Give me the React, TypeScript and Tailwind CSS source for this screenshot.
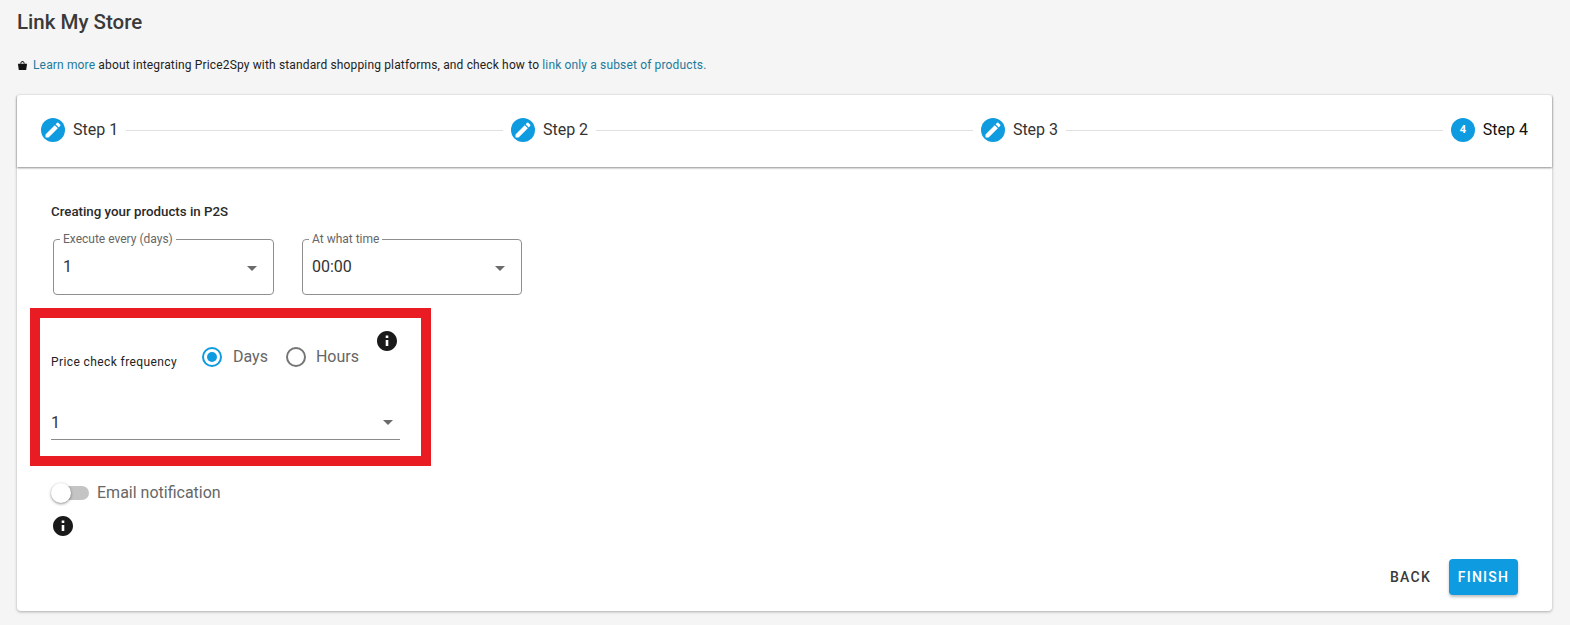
import React from "react";

const font = "font-['Roboto',sans-serif]";

const EditIcon = () => (
  <span className="w-6 h-6 rounded-full bg-[#0f9be0] flex items-center justify-center shrink-0">
    <svg viewBox="0 0 24 24" className="w-[20px] h-[20px]" fill="#fff">
      <path d="M3 17.25V21h3.75L17.81 9.94l-3.75-3.75L3 17.25zM20.71 7.04c.39-.39.39-1.02 0-1.41l-2.34-2.34a.9959.9959 0 0 0-1.41 0l-1.83 1.83 3.75 3.75 1.83-1.83z" />
    </svg>
  </span>
);

const InfoIcon = ({ className = "" }: { className?: string }) => (
  <svg viewBox="2 2 20 20" className={"w-5 h-5 block " + className} fill="#1a1a1a">
    <path d="M12 2C6.48 2 2 6.48 2 12s4.48 10 10 10 10-4.48 10-10S17.52 2 12 2zm1.3 15h-2.6v-6h2.6v6zm0-8h-2.6V6.6h2.6V9z" />
  </svg>
);

const Caret = ({ className = "" }: { className?: string }) => (
  <span className={"w-0 h-0 border-x-[5px] border-x-transparent border-t-[5px] border-t-[#6b6b6b] " + className} />
);

const Step = ({ n, active }: { n: number; active?: boolean }) => (
  <div className="flex items-center gap-2 shrink-0">
    {active ? (
      <span className="w-6 h-6 rounded-full bg-[#0f9be0] flex items-center justify-center text-white text-[11px] font-bold">
        {n}
      </span>
    ) : (
      <EditIcon />
    )}
    <span className={"text-[16px] leading-6 " + (active ? "text-[#111] font-normal" : "text-[#333]")}>Step {n}</span>
  </div>
);

const OutlinedSelect = ({ label, value, width }: { label: string; value: string; width: string }) => (
  <fieldset className={"relative h-[62px] border border-[#8f8f8f] rounded-[4px] px-[6px] " + width}>
    <legend className="text-[12px] leading-[12px] text-[#666] px-[3px] ml-0">{label}</legend>
    <div className="flex items-center justify-between pl-[3px] pr-[10px] mt-[10px]">
      <span className="text-[16px] leading-6 text-[#333]">{value}</span>
      <Caret className="mt-[3px]" />
    </div>
  </fieldset>
);

export default function App() {
  return (
    <div className={font + " w-[1570px] h-[625px] bg-[#f5f5f5] px-[17px] pt-[10px] overflow-hidden"}>
      <h1 className="text-[20.5px] leading-6 font-medium text-[#3a3a3a]">Link My Store</h1>

      <p className="mt-[23px] text-[12px] leading-[16px] tracking-[0.15px] text-[#222] flex items-center">
        <svg viewBox="0 0 12 12" className="w-[11px] h-[11px] mr-[5px]" fill="#111">
          <path d="M1 4.2h10L10 11H2z" />
          <path d="M3.6 4.2C3.6 2 5 1 6 1s2.4 1 2.4 3.2H7.4C7.4 3 6.7 2.2 6 2.2S4.6 3 4.6 4.2z" />
        </svg>
        <span>
          <span className="text-[#1b7a9c]">Learn more</span> about integrating Price2Spy with standard shopping
          platforms, and check how to <span className="text-[#1b7a9c]">link only a subset of products.</span>
        </span>
      </p>

      <div className="mt-[22px] w-[1535px] h-[516px] bg-white rounded-[4px] shadow-[0_1px_3px_rgba(0,0,0,0.3)] flex flex-col">
        <div className="h-[72px] px-[24px] pb-[2px] flex items-center shadow-[0_1px_2px_rgba(0,0,0,0.45)]">
          <Step n={1} />
          <div className="flex-1 h-px bg-[#e0e0e0] mx-2" />
          <Step n={2} />
          <div className="flex-1 h-px bg-[#e0e0e0] mx-2" />
          <Step n={3} />
          <div className="flex-1 h-px bg-[#e0e0e0] mx-2" />
          <Step n={4} active />
        </div>

        <div className="flex-1 flex flex-col pl-[13px] pr-[34px]">
          <h2 className="ml-[21px] mt-[37px] text-[13.3px] leading-4 font-medium text-[#2a2a2a]">
            Creating your products in P2S
          </h2>

          <div className="ml-[23px] mt-[13px] flex gap-[28px]">
            <OutlinedSelect label="Execute every (days)" value="1" width="w-[221px]" />
            <OutlinedSelect label="At what time" value="00:00" width="w-[220px]" />
          </div>

          <div className="mt-[13px] w-[401px] h-[158px] border-[10px] border-[#e91c24] pl-[11px] pr-[21px] flex flex-col">
            <div className="flex items-start">
              <span className="mt-[36px] w-[151px] text-[12px] tracking-[0.4px] leading-4 text-[#222]">Price check frequency</span>
              <div className="mt-[29px] flex items-center">
                <span className="w-5 h-5 rounded-full border-2 border-[#0f9be0] flex items-center justify-center">
                  <span className="w-[10px] h-[10px] rounded-full bg-[#0f9be0]" />
                </span>
                <span className="ml-[11px] text-[16px] leading-5 text-[#666]">Days</span>
                <span className="ml-[18px] w-5 h-5 rounded-full border-2 border-[#757575]" />
                <span className="ml-[10px] text-[16px] leading-5 text-[#666]">Hours</span>
              </div>
              <InfoIcon className="ml-[18px] mt-[13px]" />
            </div>
            <div className="mt-[36px] h-[34px] border-b border-[#8a8a8a] flex items-center justify-between pr-[7px]">
              <span className="text-[16px] leading-6 text-[#333]">1</span>
              <Caret />
            </div>
          </div>

          <div className="ml-[21px] mt-[15px] flex items-center">
            <span className="relative w-[38px] h-[20px] flex items-center shrink-0">
              <span className="ml-[2px] w-[36px] h-[14px] rounded-full bg-[#c4c4c4]" />
              <span className="absolute left-0 top-0 w-5 h-5 rounded-full bg-white shadow-[0_1px_3px_rgba(0,0,0,0.45)]" />
            </span>
            <span className="ml-2 text-[16px] leading-6 text-[#666]">Email notification</span>
          </div>

          <InfoIcon className="ml-[23px] mt-[11px]" />

          <div className="mt-[23px] flex items-center justify-end">
            <span className="text-[14px] leading-4 font-medium tracking-[1.25px] text-[#3a3a3a] mr-[18px]">BACK</span>
            <button className="w-[69px] h-[36px] rounded-[4px] bg-[#0f9be0] text-white text-[14px] font-medium tracking-[1.25px] shadow-[0_2px_3px_rgba(0,0,0,0.25)]">
              FINISH
            </button>
          </div>
        </div>
      </div>
    </div>
  );
}
